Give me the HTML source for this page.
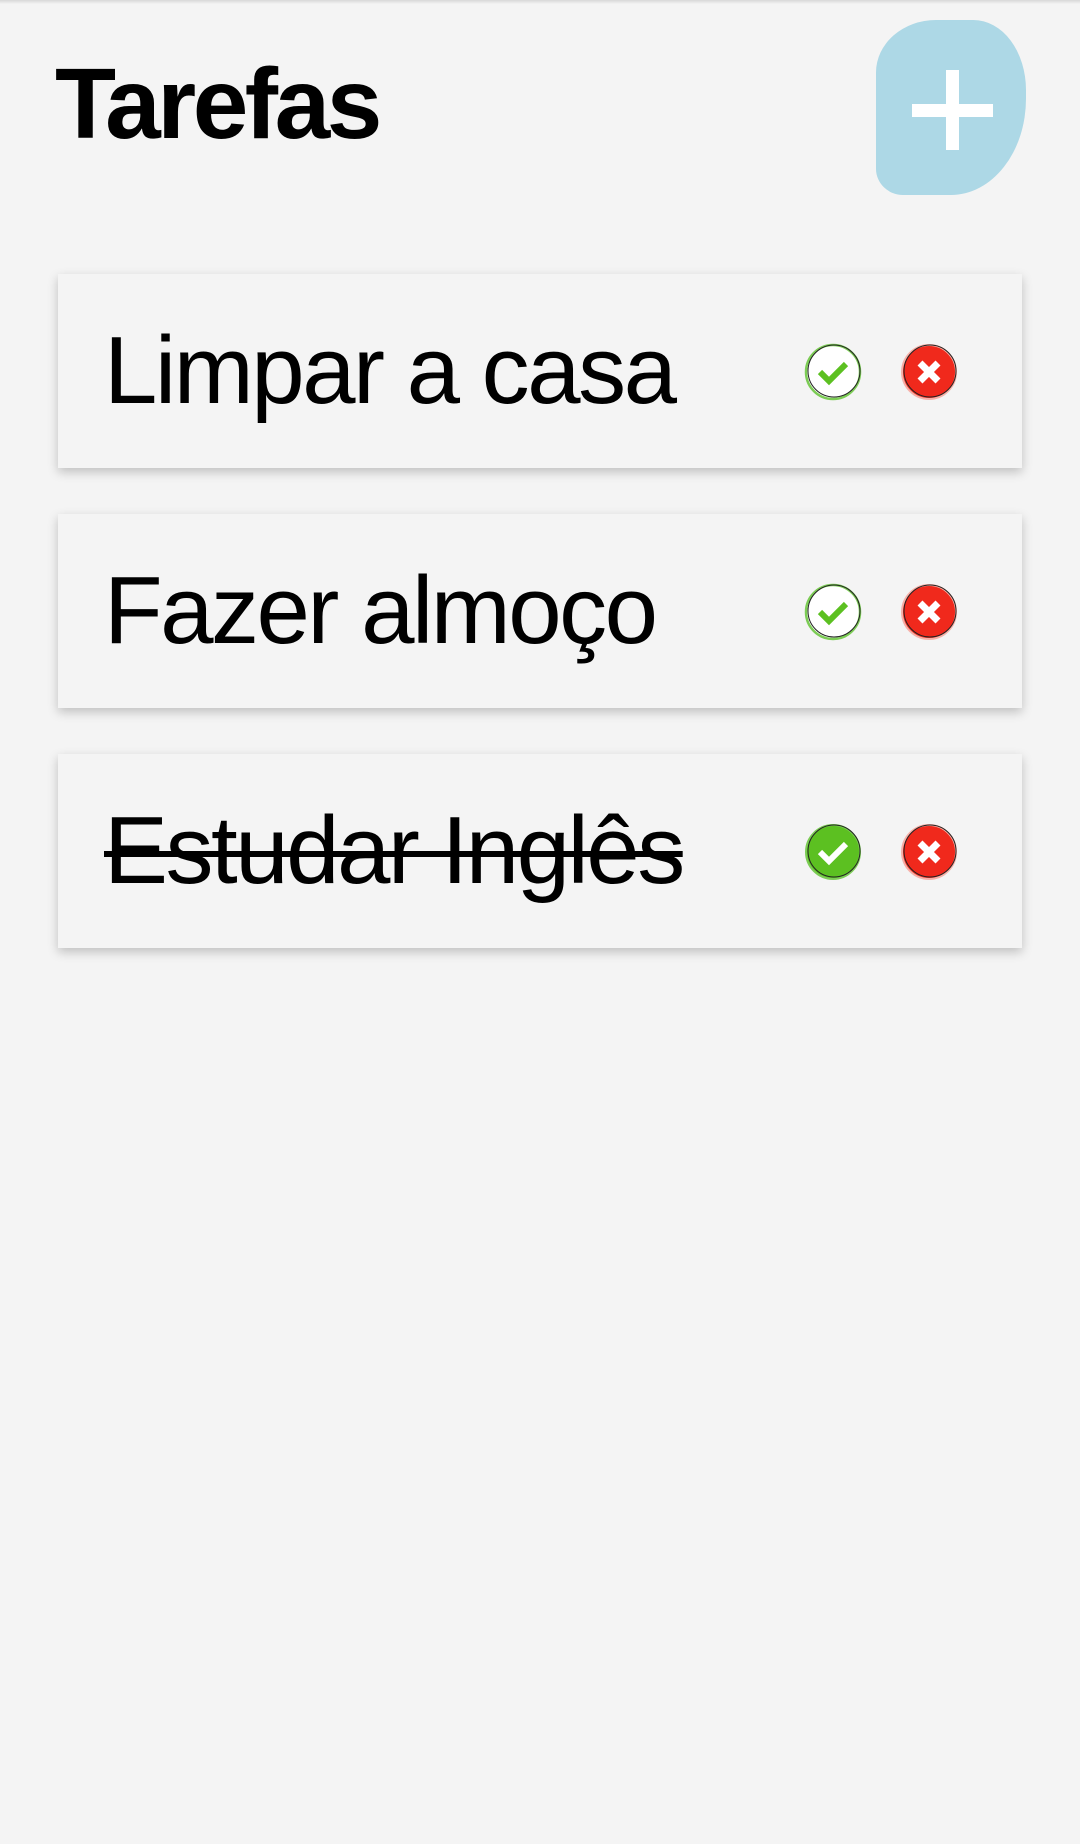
<!DOCTYPE html>
<html><head><meta charset="utf-8"><style>
body{margin:0;width:1080px;height:1844px;background:#f4f4f4;font-family:"Liberation Sans",sans-serif;position:relative;overflow:hidden}
.top{position:absolute;left:0;top:0;width:1080px;height:4px;background:linear-gradient(#d8d8d8,#f4f4f4)}
h1{position:absolute;left:55px;top:44px;margin:0;font-size:100px;font-weight:bold;letter-spacing:-3.5px;line-height:120px}
.add{position:absolute;left:876px;top:20px;width:150px;height:175px;background:#add8e6;border-radius:40% 35% 50% 18%/30% 40% 55% 15%}
.add:before{content:"";position:absolute;left:70px;top:50px;width:13px;height:80px;background:#fff}
.add:after{content:"";position:absolute;left:36px;top:84px;width:81px;height:13px;background:#fff}
.card{position:absolute;left:58px;width:964px;height:194px;background:#f4f4f4;box-shadow:0 4px 10px rgba(0,0,0,.22)}
.card span{position:absolute;left:46px;top:0;line-height:194px;font-size:96px;letter-spacing:-2.5px;color:#000}
.card svg{position:absolute;top:68px}
</style></head><body>
<div class="top"></div>
<h1>Tarefas</h1>
<div class="add"></div>

<div class="card" style="top:274px"><span>Limpar a casa</span>
<svg style="left:745px" width="60" height="60" viewBox="0 0 60 60"><circle cx="30" cy="30" r="27" fill="#fff" stroke="#7ccc55" stroke-width="2.5"/><circle cx="31" cy="29" r="26" fill="none" stroke="#222" stroke-width="1"/><path d="M17 30 L26 39 L43 22" fill="none" stroke="#5cc021" stroke-width="6"/></svg>
<svg style="left:841px" width="60" height="60" viewBox="0 0 60 60"><circle cx="30" cy="30" r="27" fill="#f0291c" stroke="#f7b0a8" stroke-width="2"/><circle cx="31" cy="29" r="26" fill="none" stroke="#222" stroke-width="1"/><path d="M21 21 L39 39 M39 21 L21 39" stroke="#fff" stroke-width="7"/></svg>
</div>

<div class="card" style="top:514px"><span>Fazer almoço</span>
<svg style="left:745px" width="60" height="60" viewBox="0 0 60 60"><circle cx="30" cy="30" r="27" fill="#fff" stroke="#7ccc55" stroke-width="2.5"/><circle cx="31" cy="29" r="26" fill="none" stroke="#222" stroke-width="1"/><path d="M17 30 L26 39 L43 22" fill="none" stroke="#5cc021" stroke-width="6"/></svg>
<svg style="left:841px" width="60" height="60" viewBox="0 0 60 60"><circle cx="30" cy="30" r="27" fill="#f0291c" stroke="#f7b0a8" stroke-width="2"/><circle cx="31" cy="29" r="26" fill="none" stroke="#222" stroke-width="1"/><path d="M21 21 L39 39 M39 21 L21 39" stroke="#fff" stroke-width="7"/></svg>
</div>

<div class="card" style="top:754px"><span style="text-decoration:line-through;text-decoration-thickness:6px">Estudar Inglês</span>
<svg style="left:745px" width="60" height="60" viewBox="0 0 60 60"><circle cx="30" cy="30" r="27" fill="#5cc021" stroke="#7ccc55" stroke-width="2"/><circle cx="31" cy="29" r="26" fill="none" stroke="#222" stroke-width="1"/><path d="M17 30 L26 39 L43 22" fill="none" stroke="#fff" stroke-width="6"/></svg>
<svg style="left:841px" width="60" height="60" viewBox="0 0 60 60"><circle cx="30" cy="30" r="27" fill="#f0291c" stroke="#f7b0a8" stroke-width="2"/><circle cx="31" cy="29" r="26" fill="none" stroke="#222" stroke-width="1"/><path d="M21 21 L39 39 M39 21 L21 39" stroke="#fff" stroke-width="7"/></svg>
</div>
</body></html>
